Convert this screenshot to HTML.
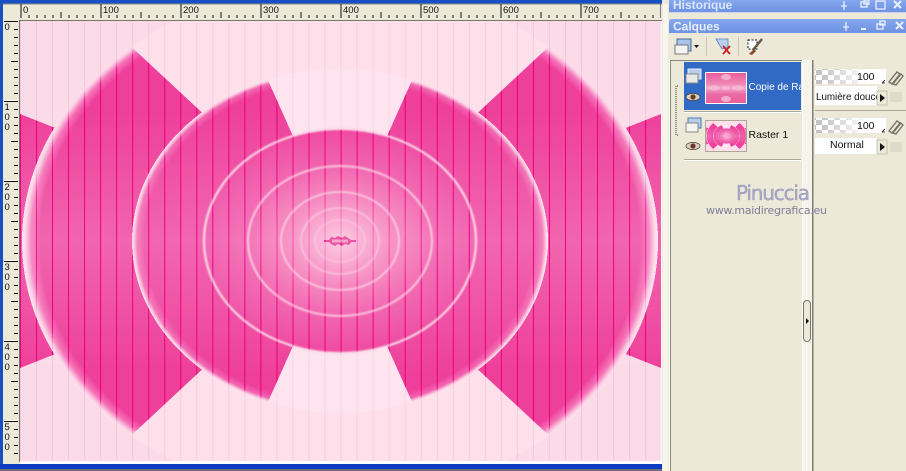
<!DOCTYPE html>
<html><head><meta charset="utf-8">
<style>
html,body{margin:0;padding:0;width:906px;height:471px;overflow:hidden;background:#ece9d8}
svg{display:block}
text{font-family:"Liberation Sans",sans-serif}
.burn{mix-blend-mode:color-burn}
</style></head><body>
<svg xmlns="http://www.w3.org/2000/svg" width="906" height="471" viewBox="0 0 906 471">
<defs>
<radialGradient id="p318" gradientUnits="userSpaceOnUse" cx="0" cy="0" r="1" gradientTransform="translate(340 241) scale(318 258)"><stop offset="0" stop-color="#fde0ea"/><stop offset="1" stop-color="#fde0ea"/><stop offset="1" stop-color="#fde0ea" stop-opacity="0"/></radialGradient>
<radialGradient id="g318" gradientUnits="userSpaceOnUse" cx="0" cy="0" r="1" gradientTransform="translate(340 241) scale(318 258)"><stop offset="0" stop-color="#ee3f9a"/><stop offset=".945" stop-color="#ee3f9a"/><stop offset=".972" stop-color="#f472b6"/><stop offset=".99" stop-color="#fbcfe3"/><stop offset="1" stop-color="#fde2ec"/><stop offset="1" stop-color="#fde2ec" stop-opacity="0"/></radialGradient>
<radialGradient id="p208" gradientUnits="userSpaceOnUse" cx="0" cy="0" r="1" gradientTransform="translate(340 241) scale(208 172)"><stop offset="0" stop-color="#fde4ee"/><stop offset="1" stop-color="#fde4ee"/><stop offset="1" stop-color="#fde4ee" stop-opacity="0"/></radialGradient>
<radialGradient id="g208" gradientUnits="userSpaceOnUse" cx="0" cy="0" r="1" gradientTransform="translate(340 241) scale(208 172)"><stop offset="0" stop-color="#ee449d"/><stop offset=".94" stop-color="#ee409b"/><stop offset=".975" stop-color="#f267b0"/><stop offset=".992" stop-color="#fbcbe0"/><stop offset="1" stop-color="#fde4ee"/><stop offset="1" stop-color="#fde4ee" stop-opacity="0"/></radialGradient>
<radialGradient id="g135"><stop offset="0" stop-color="#fbc0da"/><stop offset=".15" stop-color="#f9a2cc"/><stop offset=".4" stop-color="#f578b6"/><stop offset=".7" stop-color="#f054a6"/><stop offset="1" stop-color="#ee459e"/></radialGradient>
<linearGradient id="band" x1="0" y1="21" x2="0" y2="461" gradientUnits="userSpaceOnUse"><stop offset=".2" stop-color="#fff" stop-opacity="0"/><stop offset=".5" stop-color="#fff" stop-opacity=".2"/><stop offset=".8" stop-color="#fff" stop-opacity="0"/></linearGradient>
<radialGradient id="topg" gradientUnits="userSpaceOnUse" cx="340" cy="20" r="110" gradientTransform="translate(0 16) scale(1 .35)"><stop offset="0" stop-color="#f9bcd8"/><stop offset="1" stop-color="#f9bcd8" stop-opacity="0"/></radialGradient>
<linearGradient id="title" x1="0" y1="0" x2="0" y2="1"><stop offset="0" stop-color="#86a8ee"/><stop offset="1" stop-color="#6d90e2"/></linearGradient>
<clipPath id="c1"><polygon points="340,241 81,0 0,0 0,471 93,471"/><polygon points="340,241 599,0 661,0 661,471 587,471"/></clipPath>
<clipPath id="c2"><polygon points="340,241 232,0 0,0 0,471 237,471"/><polygon points="340,241 448,0 661,0 661,471 443,471"/></clipPath>
<clipPath id="cv"><rect x="20" y="21" width="641" height="440"/></clipPath>
<filter id="b1" x="-5%" y="-5%" width="110%" height="110%"><feGaussianBlur stdDeviation=".7"/></filter>
<pattern id="vl" x="36" y="0" width="16.03" height="10" patternUnits="userSpaceOnUse"><rect width="1" height="10" fill="#c896b4"/></pattern>
<pattern id="ts" x="20.5" y="0" width="8" height="20" patternUnits="userSpaceOnUse"><rect x="0" y="15" width="1" height="3" fill="#111"/></pattern>
<pattern id="tm" x="20.5" y="0" width="40" height="20" patternUnits="userSpaceOnUse"><rect x="0" y="12" width="1" height="6" fill="#111"/></pattern>
<pattern id="tl" x="20.5" y="0" width="80" height="20" patternUnits="userSpaceOnUse"><rect x="0" y="4" width="1" height="14" fill="#111"/></pattern>
<pattern id="vs" x="0" y="21" width="20" height="8" patternUnits="userSpaceOnUse"><rect x="14" y="0" width="4" height="1" fill="#111"/></pattern>
<pattern id="vm" x="0" y="21" width="20" height="40" patternUnits="userSpaceOnUse"><rect x="11" y="0" width="7" height="1" fill="#111"/></pattern>
<pattern id="vb" x="0" y="20" width="20" height="80" patternUnits="userSpaceOnUse"><rect x="4" y="1" width="14" height="1" fill="#111"/><rect x="4" y="0" width="14" height="1" fill="#fff" opacity=".8"/></pattern>
<pattern id="chk" width="12" height="10" patternUnits="userSpaceOnUse"><rect width="12" height="10" fill="#fff"/><rect width="6" height="5" fill="#c4c4c4"/><rect x="6" y="5" width="6" height="5" fill="#c4c4c4"/></pattern>
<linearGradient id="fade"><stop offset=".1" stop-color="#fff" stop-opacity="0"/><stop offset=".75" stop-color="#fff"/></linearGradient>
<linearGradient id="th1" x1="0" y1="0" x2="0" y2="1"><stop offset="0" stop-color="#ea5a9c"/><stop offset=".35" stop-color="#ee86b4"/><stop offset=".5" stop-color="#f4a8cb"/><stop offset=".7" stop-color="#ea6aa4"/><stop offset="1" stop-color="#e8609e"/></linearGradient>
<g id="art">
<rect x="20" y="21" width="641" height="440" fill="#fcdbe8"/>
<rect x="220" y="21" width="240" height="60" fill="url(#topg)"/>
<polygon points="340,241 20,114 20,368" fill="#ee3f9a"/>
<polygon points="340,241 661,114 661,368" fill="#ee3f9a"/>
<rect x="20" y="21" width="641" height="440" fill="url(#p318)"/>
<rect x="20" y="21" width="641" height="440" fill="url(#g318)" clip-path="url(#c1)"/>
<rect x="20" y="21" width="641" height="440" fill="url(#p208)"/>
<rect x="20" y="21" width="641" height="440" fill="url(#g208)" clip-path="url(#c2)"/>
<ellipse cx="340" cy="241" rx="135" ry="112" fill="url(#g135)"/>
<g fill="none" stroke="#fcd6e6" filter="url(#b1)">
<ellipse cx="340" cy="241" rx="136" ry="112" stroke-width="2.4" opacity=".9"/>
<ellipse cx="340" cy="241" rx="92" ry="75" stroke-width="2.2" opacity=".75"/>
<ellipse cx="340" cy="241" rx="59" ry="49" stroke-width="2" opacity=".7"/>
<ellipse cx="340" cy="241" rx="39" ry="33" stroke-width="1.8" opacity=".55"/>
<ellipse cx="340" cy="241" rx="25" ry="21" stroke-width="1.5" opacity=".45"/>
</g>
<rect x="20" y="21" width="641" height="440" fill="url(#band)"/>
<polygon points="324,240 329,240 331,237 335,238 338,236 342,238 345,236 348,238 351,240 356,240 356,242 351,242 349,245 345,244 342,246 338,244 335,246 331,244 329,242 324,242" fill="#ee54a6"/>
<rect x="332" y="239.5" width="16" height="3" fill="#f8a6cd"/>
</g>
</defs>

<rect width="906" height="471" fill="#ece9d8"/>
<rect x="0" y="0" width="663" height="4" fill="#1650c4"/>
<rect x="0" y="0" width="3" height="471" fill="#1650c4"/>
<rect x="3" y="4" width="659" height="16" fill="#ece9d8"/>
<rect x="3" y="3.5" width="659" height="1" fill="#8a8a80"/>

<!-- ruler top -->
<rect x="20" y="4" width="641" height="15" fill="url(#ts)"/>
<rect x="20" y="4" width="641" height="15" fill="url(#tm)"/>
<rect x="20" y="4" width="641" height="15" fill="url(#tl)"/>
<g font-size="9.5" fill="#111">
<text x="23" y="13">0</text><text x="103" y="13">100</text><text x="183" y="13">200</text><text x="263" y="13">300</text><text x="343" y="13">400</text><text x="423" y="13">500</text><text x="503" y="13">600</text><text x="583" y="13">700</text>
</g>
<!-- ruler left -->
<rect x="3" y="21" width="16" height="440" fill="url(#vs)"/>
<rect x="3" y="21" width="16" height="440" fill="url(#vm)"/>
<rect x="3" y="21" width="16" height="440" fill="url(#vb)"/>
<g font-size="9.5" fill="#111">
<text x="4.5" y="30">0</text>
<text x="4.5" y="110">1</text><text x="4.5" y="120">0</text><text x="4.5" y="130">0</text>
<text x="4.5" y="190">2</text><text x="4.5" y="200">0</text><text x="4.5" y="210">0</text>
<text x="4.5" y="270">3</text><text x="4.5" y="280">0</text><text x="4.5" y="290">0</text>
<text x="4.5" y="350">4</text><text x="4.5" y="360">0</text><text x="4.5" y="370">0</text>
<text x="4.5" y="430">5</text><text x="4.5" y="440">0</text><text x="4.5" y="450">0</text>
</g>
<rect x="19" y="20" width="643" height="1.4" fill="#77756a"/>
<rect x="19" y="20" width="1.4" height="442" fill="#77756a"/>

<!-- canvas -->
<g clip-path="url(#cv)" style="isolation:isolate">
<use href="#art"/>
<rect class="burn" x="20" y="21" width="641" height="440" fill="url(#vl)"/>
</g>
<rect x="661" y="21" width="4" height="443" fill="#fff"/>
<rect x="20" y="461" width="645" height="3" fill="#fff"/>
<rect x="0" y="464" width="663" height="5" fill="#0a3cc4"/>
<rect x="0" y="469" width="668" height="2" fill="#6c7076"/>

<!-- panel -->
<rect x="662" y="0" width="244" height="471" fill="#ece9d8"/>
<rect x="663" y="4" width="5" height="467" fill="#f8f6ec"/>
<rect x="669" y="60" width="1" height="411" fill="#fff"/>
<path d="M669 0H906V12.500H669Z" fill="url(#title)"/>
<rect x="669" y="12" width="237" height="1" fill="#c8d4f0"/>
<path d="M669 33V22Q669 19 672 19H906V33Z" fill="url(#title)"/>
<text x="673" y="9" font-size="12" font-weight="bold" fill="#dbe5fa">Historique</text>
<text x="673" y="30.500" font-size="12" font-weight="bold" fill="#e6eefc">Calques</text>
<g fill="none" stroke="#eaf0fc" stroke-width="1.300">
<path d="M844 1V6M841 6H847M844 6V10"/><rect x="861" y="2" width="6" height="5"/><rect x="864" y="0" width="5" height="4"/><rect x="876" y="1" width="9" height="8"/><path d="M894 1L901 8M901 1L894 8" stroke-width="2"/>
<path d="M846 22V27M843 27H849M846 27V31"/><path d="M861 29H866" stroke-width="2"/><rect x="877" y="24" width="6" height="5"/><rect x="880" y="21" width="5" height="4"/><path d="M896 22L903 29M903 22L896 29" stroke-width="2"/>
</g>

<!-- toolbar -->
<rect x="677" y="39" width="14" height="12" fill="#a9c4ea" stroke="#4a6a9a"/><path d="M675 45H688V54H675Z" fill="#f4f4f0" stroke="#777"/>
<path d="M694 45H699L696.500 48Z" fill="#111"/>
<rect x="706" y="37" width="1" height="19" fill="#c8c5b2"/>
<path d="M716 39H728V47L722 49Z" fill="#b8d0ee" stroke="#5a82b8" stroke-width=".8"/>
<path d="M723 46L730 54M730 46L723 54" stroke="#c82020" stroke-width="1.800"/>
<rect x="738" y="37" width="1" height="19" fill="#c8c5b2"/>
<rect x="748" y="40" width="9" height="9" fill="#fff" stroke="#111" stroke-dasharray="2 1.500"/>
<path d="M762 39L753 50" stroke="#6a5a48" stroke-width="2.500"/><path d="M754 49L749 54L752 55L756 51Z" fill="#8a4a2a"/>

<!-- list -->
<rect x="670" y="60" width="1" height="411" fill="#8b897c"/>
<rect x="670" y="60" width="133" height="1" fill="#8b897c"/>
<rect x="684" y="62" width="117" height="48" fill="#316ac5"/>
<rect x="684" y="111" width="117" height="1" fill="#aca899"/>
<rect x="684" y="159" width="117" height="1" fill="#aca899"/>
<rect x="684" y="112" width="117" height="1" fill="#fff"/>
<rect x="684" y="160" width="117" height="1" fill="#fff"/>
<path d="M678 86H676V135H678" fill="none" stroke="#333" stroke-dasharray="1 1"/>
<rect x="688" y="69" width="13" height="10" fill="#b7cdec" stroke="#e4ecf8"/><rect x="686" y="74" width="12" height="9" fill="#e8e8e4" stroke="#888"/>
<rect x="688" y="118" width="13" height="10" fill="#b7cdec" stroke="#4a7ab0"/><rect x="686" y="123" width="12" height="9" fill="#f4f4f0" stroke="#888"/>
<ellipse cx="693" cy="97" rx="7" ry="3.600" fill="#d8d0c8" stroke="#4a3a30" stroke-width=".7"/><circle cx="693" cy="97" r="2.600" fill="#6a3a20"/>
<ellipse cx="693" cy="146" rx="7" ry="3.600" fill="#d8d0c8" stroke="#4a3a30" stroke-width=".7"/><circle cx="693" cy="146" r="2.600" fill="#6a3a20"/>
<rect x="705.500" y="72.500" width="41" height="31" fill="url(#th1)" stroke="#fff"/>
<g fill="#f8bcd6" opacity=".8"><ellipse cx="726" cy="77" rx="5" ry="3"/><ellipse cx="726" cy="99" rx="5" ry="3"/><ellipse cx="714" cy="88" rx="6" ry="2.500"/><ellipse cx="738" cy="88" rx="6" ry="2.500"/><ellipse cx="726" cy="88" rx="4" ry="2"/></g>
<svg x="706" y="121" width="41" height="30" viewBox="20 21 641 440" preserveAspectRatio="none"><use href="#art"/></svg>
<rect x="705.500" y="120.500" width="41" height="31" fill="none" stroke="#aca899"/>
<svg x="684" y="62" width="117" height="48"><text x="64.500" y="28" font-size="10" fill="#fff">Copie de Raster 2</text></svg>
<text x="748.500" y="138" font-size="10.500" fill="#111">Raster 1</text>

<!-- splitter -->
<rect x="802" y="60" width="10" height="411" fill="#f6f4ea"/>
<rect x="802" y="60" width="1" height="411" fill="#fff"/>
<rect x="812" y="60" width="1.500" height="411" fill="#807e72"/>
<rect x="803.500" y="300.500" width="7" height="41" rx="3.500" fill="#ece9d8" stroke="#77756a"/>
<path d="M806 318L809 321L806 324Z" fill="#111"/>

<!-- right controls -->
<rect x="815" y="69" width="71" height="15" fill="url(#chk)"/><rect x="815" y="69" width="71" height="15" fill="url(#fade)"/>
<text x="857" y="80" font-size="10.500" fill="#111">100</text>
<path d="M882 83L885 80M882 83H885" stroke="#333" fill="none"/>
<rect x="815" y="86" width="62" height="19" fill="#fff"/>
<text x="816" y="100" font-size="9.800" fill="#111">Lumière douce</text>
<rect x="877" y="91" width="10" height="14" fill="#ece9d8" stroke="#aca899" stroke-width=".6"/><path d="M880 94L885 98L880 102Z" fill="#111"/>
<rect x="815" y="110" width="91" height="1" fill="#aca899"/>
<rect x="815" y="118" width="71" height="15" fill="url(#chk)"/><rect x="815" y="118" width="71" height="15" fill="url(#fade)"/>
<text x="857" y="129" font-size="10.500" fill="#111">100</text>
<path d="M882 132L885 129M882 132H885" stroke="#333" fill="none"/>
<rect x="815" y="138" width="62" height="16" fill="#fff"/>
<text x="830" y="148" font-size="10.500" fill="#111">Normal</text>
<rect x="877" y="140" width="10" height="14" fill="#ece9d8" stroke="#aca899" stroke-width=".6"/><path d="M880 143L885 147L880 151Z" fill="#111"/>
<g fill="none" stroke="#77756a" stroke-width="1.400">
<path d="M889 82L897 72L900 74L892 84Z"/><path d="M893 84L901 74L903 76L896 85Z"/>
<path d="M889 131L897 121L900 123L892 133Z"/><path d="M893 133L901 123L903 125L896 134Z"/>
</g>
<rect x="890" y="92" width="12" height="10" fill="#dedbc8"/><rect x="890" y="142" width="12" height="10" fill="#dedbc8"/>

<!-- watermark -->
<text x="736" y="200" font-size="20" fill="#a9a9c9" stroke="#8a8aa8" stroke-width=".3" style="font-family:'DejaVu Sans',sans-serif" textLength="74">Pinuccia</text>
<text x="706" y="214" font-size="11" fill="#7e7e98" style="font-family:'DejaVu Sans',sans-serif" textLength="121">www.maidiregrafica.eu</text>
</svg>
</body></html>
